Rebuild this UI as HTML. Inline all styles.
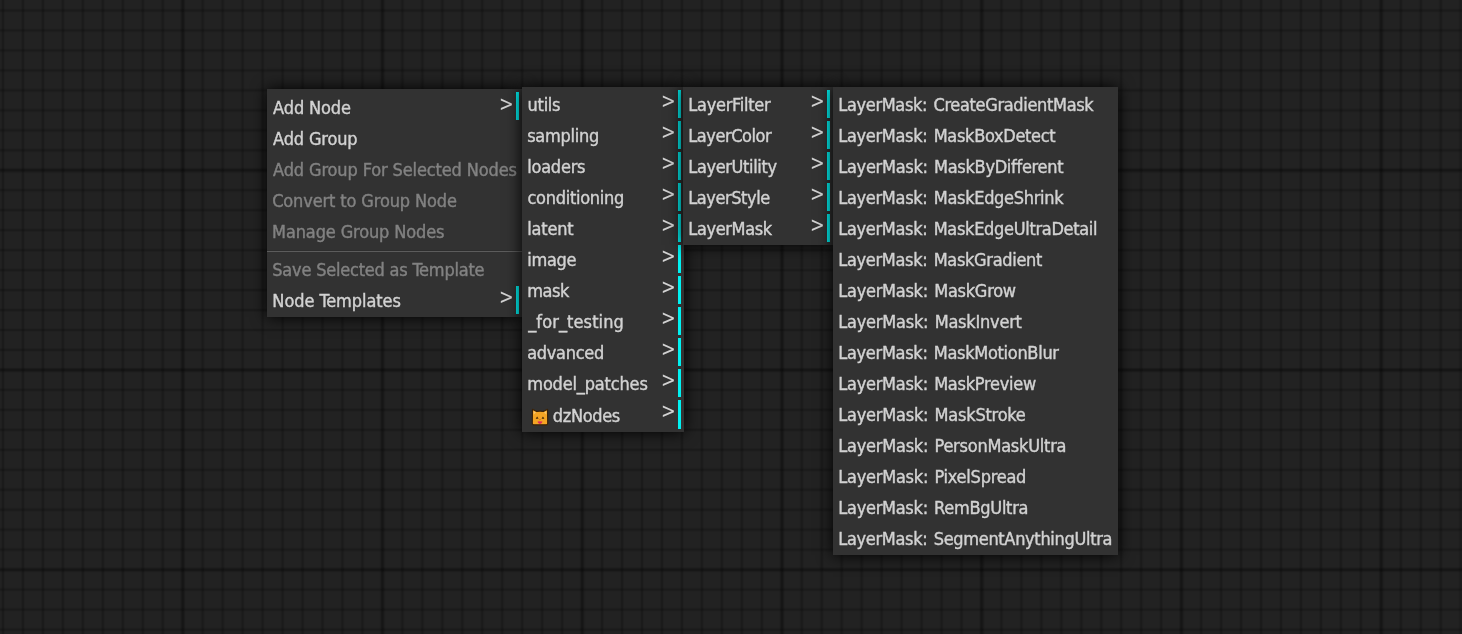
<!DOCTYPE html>
<html lang="en">
<head>
<meta charset="utf-8">
<title>ComfyUI</title>
<style>
html,body{margin:0;padding:0;}
body{width:1462px;height:634px;overflow:hidden;background-color:#222222;position:relative;
  font-family:"DejaVu Sans Condensed","Liberation Sans",sans-serif;}
#grid{position:absolute;left:0;top:0;width:1462px;height:634px;
  background-image:
    linear-gradient(to right, rgba(0,0,0,0) 0, rgba(0,0,0,0.2) 2.2px, rgba(0,0,0,0.2) 3.8px, rgba(0,0,0,0) 6px, rgba(0,0,0,0) 100%),
    linear-gradient(to bottom, rgba(0,0,0,0) 0, rgba(0,0,0,0.2) 2.2px, rgba(0,0,0,0.2) 3.8px, rgba(0,0,0,0) 6px, rgba(0,0,0,0) 100%),
    linear-gradient(to right, rgba(0,0,0,0) 0, rgba(0,0,0,0.2) 1.4px, rgba(0,0,0,0.2) 2.6px, rgba(0,0,0,0) 4px, rgba(0,0,0,0) 100%),
    linear-gradient(to bottom, rgba(0,0,0,0) 0, rgba(0,0,0,0.2) 1.4px, rgba(0,0,0,0.2) 2.6px, rgba(0,0,0,0) 4px, rgba(0,0,0,0) 100%);
  background-size:199.8px 199.8px,199.8px 199.8px,19.98px 19.98px,19.98px 19.98px;
  background-position:179.82px 0,0 167.34px,1.00px 0,0 8.50px;
}
.menu{position:absolute;background:#323232;box-shadow:0 0 15px #000;color:#d2d2d2;font-size:18px;line-height:22px;padding:0;box-sizing:border-box;will-change:transform;}
.entry{margin:3px;padding:3px;height:22px;white-space:nowrap;position:relative;}
.entry.sub{border-right:3px solid #00f2f2;}
.entry.dis{color:#828282;}
.entry.cat{height:23px;}
.entry .t{display:inline-block;position:relative;top:1px;-webkit-text-stroke:0.4px currentColor;}
#m1 .entry .t{top:2px;}
#m4 .entry .t{word-spacing:1.4px;}
#m1 .entry .more{top:1.1px;}
#m1 .sep ~ .entry .t{top:1px;}
#m1 .sep ~ .entry .more{top:-0.1px;}
.entry .more{position:absolute;right:2.4px;top:0.2px;font-size:21px;letter-spacing:0;transform:scaleX(0.93);transform-origin:100% 50%;}
.entry .cat{position:absolute;left:6.3px;top:7.9px;width:18px;height:18px;}
.entry.cat .t{padding-left:22px;top:2px;}
.sep{height:0;margin:6px 0 3px 0;border-top:1px solid #2e2e2e;border-bottom:1px solid #5c5c5c;}

</style>
</head>
<body>
<div id="grid"></div>
<div class="menu" id="m1" style="left:267px;top:89px;width:255px;">
  <div class="entry sub"><span class="t" style="margin-left:0.11px;letter-spacing:-0.133px">Add Node</span><span class="more">&gt;</span></div>
  <div class="entry "><span class="t" style="margin-left:0.11px;letter-spacing:-0.160px">Add Group</span></div>
  <div class="entry dis"><span class="t" style="margin-left:0.07px;letter-spacing:-0.126px">Add Group For Selected Nodes</span></div>
  <div class="entry dis"><span class="t" style="margin-left:-0.88px;letter-spacing:-0.121px">Convert to Group Node</span></div>
  <div class="entry dis"><span class="t" style="margin-left:-0.90px;letter-spacing:-0.134px">Manage Group Nodes</span></div>
  <div class="sep"></div>
  <div class="entry dis"><span class="t" style="margin-left:-0.72px;letter-spacing:-0.210px">Save Selected as Template</span></div>
  <div class="entry sub"><span class="t" style="margin-left:-0.67px;letter-spacing:-0.072px">Node Templates</span><span class="more">&gt;</span></div>
</div>
<div class="menu" id="m2" style="left:522px;top:86.5px;width:162px;">
  <div class="entry sub"><span class="t" style="margin-left:-0.40px;letter-spacing:-0.283px">utils</span><span class="more">&gt;</span></div>
  <div class="entry sub"><span class="t" style="margin-left:-0.89px;letter-spacing:-0.271px">sampling</span><span class="more">&gt;</span></div>
  <div class="entry sub"><span class="t" style="margin-left:-0.83px;letter-spacing:-0.216px">loaders</span><span class="more">&gt;</span></div>
  <div class="entry sub"><span class="t" style="margin-left:-0.63px;letter-spacing:-0.265px">conditioning</span><span class="more">&gt;</span></div>
  <div class="entry sub"><span class="t" style="margin-left:-0.83px;letter-spacing:-0.186px">latent</span><span class="more">&gt;</span></div>
  <div class="entry sub"><span class="t" style="margin-left:-0.81px;letter-spacing:-0.267px">image</span><span class="more">&gt;</span></div>
  <div class="entry sub"><span class="t" style="margin-left:-0.72px;letter-spacing:-0.446px">mask</span><span class="more">&gt;</span></div>
  <div class="entry sub"><span class="t" style="margin-left:0.13px;letter-spacing:0.105px">_for_testing</span><span class="more">&gt;</span></div>
  <div class="entry sub"><span class="t" style="margin-left:-0.75px;letter-spacing:-0.312px">advanced</span><span class="more">&gt;</span></div>
  <div class="entry sub"><span class="t" style="margin-left:-0.72px;letter-spacing:-0.175px">model_patches</span><span class="more">&gt;</span></div>
  <div class="entry sub cat"><svg class="cat" role="img" aria-label="😽" viewBox="-0.5 -0.5 17 17" width="17" height="17"><path d="M0.9 0.7 L4.9 2.8 Q8 2.1 11.1 2.8 L15.1 0.7 L15.3 14 Q15.3 15.4 14 15.4 L2 15.4 Q0.7 15.4 0.7 14 Z" fill="#f5a524" stroke="#3a2208" stroke-width="1.1" stroke-linejoin="round"/><path d="M1.9 2.3 L4.3 3.7 L2 5.6 Z M14.1 2.3 L11.7 3.7 L14 5.6 Z" fill="#fac56a"/><path d="M4.4 9.7 L5.3 8.4 L6.2 9.7 M9.9 9.7 L10.8 8.4 L11.7 9.7" stroke="#4a2a08" stroke-width="1" fill="none"/><path d="M7.3 10 L8.7 10 L8 11 Z" fill="#c24a2a"/><path d="M5.6 12.6 Q6.8 11.5 8 12.3 Q9.2 11.5 10.4 12.6 Q9.6 14.5 8 14.5 Q6.4 14.5 5.6 12.6 Z" fill="#de2a5c"/></svg><span class="t" style="margin-left:2.86px;letter-spacing:-0.362px">dzNodes</span><span class="more">&gt;</span></div>
</div>
<div class="menu" id="m3" style="left:683px;top:86.5px;width:150px;">
  <div class="entry sub"><span class="t" style="margin-left:-0.76px;letter-spacing:-0.277px">LayerFilter</span><span class="more">&gt;</span></div>
  <div class="entry sub"><span class="t" style="margin-left:-0.76px;letter-spacing:-0.450px">LayerColor</span><span class="more">&gt;</span></div>
  <div class="entry sub"><span class="t" style="margin-left:-0.76px;letter-spacing:-0.367px">LayerUtility</span><span class="more">&gt;</span></div>
  <div class="entry sub"><span class="t" style="margin-left:-0.76px;letter-spacing:-0.432px">LayerStyle</span><span class="more">&gt;</span></div>
  <div class="entry sub"><span class="t" style="margin-left:-0.76px;letter-spacing:-0.362px">LayerMask</span><span class="more">&gt;</span></div>
</div>
<div class="menu" id="m4" style="left:833px;top:86.5px;width:285px;">
  <div class="entry "><span class="t" style="margin-left:-0.76px;letter-spacing:-0.333px">LayerMask: CreateGradientMask</span></div>
  <div class="entry "><span class="t" style="margin-left:-0.76px;letter-spacing:-0.312px">LayerMask: MaskBoxDetect</span></div>
  <div class="entry "><span class="t" style="margin-left:-0.76px;letter-spacing:-0.284px">LayerMask: MaskByDifferent</span></div>
  <div class="entry "><span class="t" style="margin-left:-0.76px;letter-spacing:-0.307px">LayerMask: MaskEdgeShrink</span></div>
  <div class="entry "><span class="t" style="margin-left:-0.76px;letter-spacing:-0.311px">LayerMask: MaskEdgeUltraDetail</span></div>
  <div class="entry "><span class="t" style="margin-left:-0.76px;letter-spacing:-0.315px">LayerMask: MaskGradient</span></div>
  <div class="entry "><span class="t" style="margin-left:-0.76px;letter-spacing:-0.263px">LayerMask: MaskGrow</span></div>
  <div class="entry "><span class="t" style="margin-left:-0.76px;letter-spacing:-0.223px">LayerMask: MaskInvert</span></div>
  <div class="entry "><span class="t" style="margin-left:-0.76px;letter-spacing:-0.302px">LayerMask: MaskMotionBlur</span></div>
  <div class="entry "><span class="t" style="margin-left:-0.76px;letter-spacing:-0.268px">LayerMask: MaskPreview</span></div>
  <div class="entry "><span class="t" style="margin-left:-0.76px;letter-spacing:-0.226px">LayerMask: MaskStroke</span></div>
  <div class="entry "><span class="t" style="margin-left:-0.76px;letter-spacing:-0.237px">LayerMask: PersonMaskUltra</span></div>
  <div class="entry "><span class="t" style="margin-left:-0.76px;letter-spacing:-0.241px">LayerMask: PixelSpread</span></div>
  <div class="entry "><span class="t" style="margin-left:-0.76px;letter-spacing:-0.274px">LayerMask: RemBgUltra</span></div>
  <div class="entry "><span class="t" style="margin-left:-0.76px;letter-spacing:-0.312px">LayerMask: SegmentAnythingUltra</span></div>
</div>
</body>
</html>
